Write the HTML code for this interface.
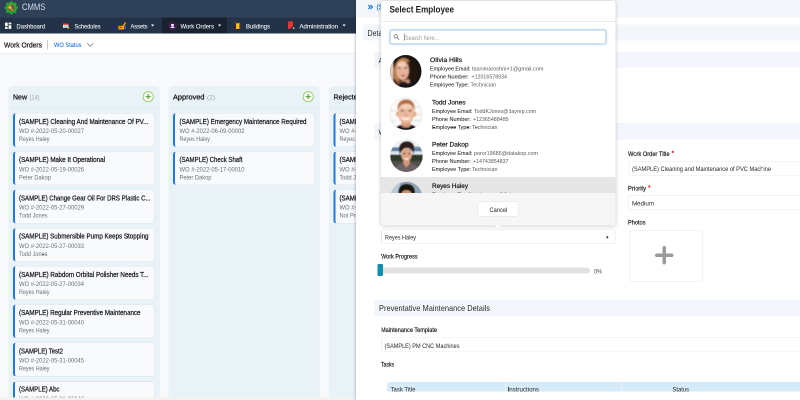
<!DOCTYPE html>
<html lang="en"><head><meta charset="utf-8"><title>CMMS - Work Orders</title>
<style>
html,body{margin:0;padding:0;width:800px;height:400px;overflow:hidden;background:#f8f9fb}
body{font-family:"Liberation Sans",sans-serif}
#stage{position:absolute;left:0;top:0;width:1600px;height:800px;transform:scale(.5);transform-origin:0 0;will-change:transform;overflow:hidden;background:#f8f9fb}
.b{position:absolute;box-sizing:border-box}
.t{position:absolute;white-space:nowrap;transform-origin:0 50%;transform:scaleX(.9)}
svg{position:absolute;overflow:visible}

#t1{transform:scaleX(0.8704)}
#t2{transform:scaleX(0.8835)}
#t3{transform:scaleX(0.8442)}
#t4{transform:scaleX(0.8591)}
#t5{transform:scaleX(0.8993)}
#t6{transform:scaleX(0.8967)}
#t7{transform:scaleX(0.9215)}
#t8{transform:scaleX(0.8858)}
#t9{transform:scaleX(0.8889)}
#t10{transform:scaleX(0.9213)}
#t11{transform:scaleX(0.8785)}
#t12{transform:scaleX(0.9094)}
#t13{transform:scaleX(0.9285)}
#t14{transform:scaleX(0.8543)}
#t15{transform:scaleX(0.9081)}
#t16{transform:scaleX(0.9285)}
#t17{transform:scaleX(0.9141)}
#t18{transform:scaleX(0.8773)}
#t19{transform:scaleX(0.9285)}
#t20{transform:scaleX(0.8848)}
#t21{transform:scaleX(0.903)}
#t22{transform:scaleX(0.9285)}
#t23{transform:scaleX(0.8848)}
#t24{transform:scaleX(0.9088)}
#t25{transform:scaleX(0.9285)}
#t26{transform:scaleX(0.8543)}
#t27{transform:scaleX(0.9028)}
#t28{transform:scaleX(0.9285)}
#t29{transform:scaleX(0.8543)}
#t30{transform:scaleX(0.865)}
#t31{transform:scaleX(0.9285)}
#t32{transform:scaleX(0.8543)}
#t33{transform:scaleX(0.8803)}
#t34{transform:scaleX(0.9285)}
#t35{transform:scaleX(0.8543)}
#t36{transform:scaleX(0.969)}
#t37{transform:scaleX(1.023)}
#t38{transform:scaleX(0.9025)}
#t39{transform:scaleX(0.9285)}
#t40{transform:scaleX(0.8543)}
#t41{transform:scaleX(0.8741)}
#t42{transform:scaleX(0.9285)}
#t43{transform:scaleX(0.9141)}
#t44{transform:scaleX(0.9341)}
#t45{transform:scaleX(1.023)}
#t46{transform:scaleX(0.8824)}
#t47{transform:scaleX(0.9285)}
#t48{transform:scaleX(0.8543)}
#t49{transform:scaleX(0.9072)}
#t50{transform:scaleX(0.9285)}
#t51{transform:scaleX(0.8848)}
#t52{transform:scaleX(0.8911)}
#t53{transform:scaleX(0.9285)}
#t54{transform:scaleX(0.9064)}
#t56{transform:scaleX(0.902)}
#t59{transform:scaleX(0.9225)}
#t61{transform:scaleX(0.8902)}
#t62{transform:scaleX(0.9335)}
#t64{transform:scaleX(0.9667)}
#t65{transform:scaleX(0.9072)}
#t66{transform:scaleX(0.8826)}
#t67{transform:scaleX(0.8933)}
#t68{transform:scaleX(0.9225)}
#t69{transform:scaleX(0.898)}
#t70{transform:scaleX(0.8999)}
#t71{transform:scaleX(0.8681)}
#t72{transform:scaleX(0.8209)}
#t73{transform:scaleX(0.9679)}
#t74{transform:scaleX(0.9943)}
#t75{transform:scaleX(0.9391)}
#t76{transform:scaleX(0.9016)}
#t77{transform:scaleX(0.8735)}
#t78{transform:scaleX(1.0549)}
#t79{transform:scaleX(0.9287)}
#t80{transform:scaleX(0.9533)}
#t81{transform:scaleX(0.9556)}
#t82{transform:scaleX(0.9137)}
#t83{transform:scaleX(0.9381)}
#t84{transform:scaleX(0.931)}
#t85{transform:scaleX(1.0075)}
#t86{transform:scaleX(0.9287)}
#t87{transform:scaleX(0.9107)}
#t88{transform:scaleX(0.9556)}
#t89{transform:scaleX(0.9137)}
#t90{transform:scaleX(0.9381)}
#t91{transform:scaleX(0.931)}
#t92{transform:scaleX(1.0102)}
#t93{transform:scaleX(0.9287)}
#t94{transform:scaleX(0.9311)}
#t95{transform:scaleX(0.9556)}
#t96{transform:scaleX(0.9137)}
#t97{transform:scaleX(0.9381)}
#t98{transform:scaleX(0.931)}
#t99{transform:scaleX(0.9769)}
#t100{transform:scaleX(0.9287)}
#t101{transform:scaleX(0.9195)}
#t102{transform:scaleX(0.9556)}
#t103{transform:scaleX(0.9137)}
#t104{transform:scaleX(0.9381)}
#t105{transform:scaleX(0.931)}
#t106{transform:scaleX(0.8935)}
</style></head>
<body>
<div id="stage">
<div class="b" style="left:0px;top:0px;width:1600px;height:35px;background:#2f4059;"></div>
<div class="b" style="left:0px;top:35px;width:1600px;height:32.2px;background:#243247;"></div>
<div class="b" style="left:324px;top:35px;width:130px;height:32.2px;background:#19222f;"></div>
<svg style="left:9.4px;top:1.6px" width="27.2px" height="27.2px" viewBox="-14 -14 28 28">
<g fill="#22a830"><circle r="10.8"/>
<rect x="-3.200" y="-13.600" width="6.400" height="27.200" rx="2"/><rect x="-3.200" y="-13.600" width="6.400" height="27.200" rx="2" transform="rotate(45)"/><rect x="-3.200" y="-13.600" width="6.400" height="27.200" rx="2" transform="rotate(90)"/><rect x="-3.200" y="-13.600" width="6.400" height="27.200" rx="2" transform="rotate(135)"/></g>
<circle r="6.400" fill="#4b5563" stroke="#c2631c" stroke-width="1.6"/>
<path transform="scale(.72)" d="M-5.500 -4.500a3 3 0 0 1 4.500 -1l-2 2 1.500 1.500 2 -2a3 3 0 0 1 -1 4.500l5.500 5.500-2 2-5.500-5.500a3.200 3.200 0 0 1 -3 -7z" fill="#ffc021"/>
</svg>
<span id="t1" class="t" style="left:44.4px;top:4.34px;font-size:17.6px;line-height:21.12px;color:#d3dbe8;">CMMS</span>
<svg style="left:10px;top:45px" width="12.6px" height="13px" viewBox="0 0 14 14"><rect x="0" y="0" width="6" height="8" fill="#fff"/><rect x="8" y="0" width="6" height="4" fill="#fff"/><rect x="0" y="10" width="6" height="4" fill="#fff"/><rect x="8" y="6" width="6" height="8" fill="#fff"/></svg>
<span id="t2" class="t" style="left:33px;top:44.58px;font-size:13.2px;line-height:15.84px;color:#f0f3f8;-webkit-text-stroke:.2px #f0f3f8;">Dashboard</span>
<svg style="left:126.4px;top:47.2px" width="12.8px" height="10.8px" viewBox="0 0 14 12"><rect x="0" y="0" width="12" height="10" fill="#e9edf2"/><rect x="0" y="0" width="12" height="3" fill="#e53935"/><rect x="2" y="5" width="8" height="1.4" fill="#9aa3ad"/><rect x="2" y="7.5" width="8" height="1.4" fill="#9aa3ad"/><circle cx="12" cy="10" r="2" fill="#f4b400"/></svg>
<span id="t3" class="t" style="left:149px;top:44.58px;font-size:13.2px;line-height:15.84px;color:#f0f3f8;-webkit-text-stroke:.2px #f0f3f8;">Schedules</span>
<svg style="left:236px;top:43px" width="17px" height="17px" viewBox="0 0 17 17"><path d="M2 10h9v4H2z" fill="none" stroke="#f4a51c" stroke-width="2.4"/><path d="M6 9l3 3 6-10" fill="none" stroke="#f4a51c" stroke-width="2.6"/><rect x="1" y="15" width="11" height="2" fill="#3b6fd4"/><rect x="13" y="8" width="2.5" height="7" fill="#3b6fd4"/></svg>
<span id="t4" class="t" style="left:261px;top:44.58px;font-size:13.2px;line-height:15.84px;color:#f0f3f8;-webkit-text-stroke:.2px #f0f3f8;">Assets</span>
<svg style="left:301.8px;top:48.6px" width="6.4px" height="4px" viewBox="0 0 8 5"><path d="M0 0h8l-4 5z" fill="#fff"/></svg>
<svg style="left:337px;top:44px" width="16px" height="16px" viewBox="0 0 16 16"><circle cx="8" cy="8" r="7.5" fill="#3a1a5e" stroke="#7a1f2b" stroke-width="1"/><path d="M5 4h6v3h-1v3h2v2H4v-2h2V7H5z" fill="#dfe3f5"/></svg>
<span id="t5" class="t" style="left:361px;top:44.58px;font-size:13.2px;line-height:15.84px;color:#f0f3f8;-webkit-text-stroke:.2px #f0f3f8;">Work Orders</span>
<svg style="left:435.8px;top:48.6px" width="6.4px" height="4px" viewBox="0 0 8 5"><path d="M0 0h8l-4 5z" fill="#fff"/></svg>
<svg style="left:468.6px;top:43px" width="12.4px" height="17.6px" viewBox="0 0 14 18"><rect x="3" y="3" width="9" height="14" fill="#f5c518"/><rect x="1" y="3" width="2.5" height="14" fill="#5a1a1a"/><rect x="11" y="5" width="2.5" height="12" fill="#7a2a1a"/><rect x="0" y="0" width="2" height="2" fill="#e53935"/><rect x="4" y="16" width="7" height="1.6" fill="#2d1a12"/></svg>
<span id="t6" class="t" style="left:492px;top:44.58px;font-size:13.2px;line-height:15.84px;color:#f0f3f8;-webkit-text-stroke:.2px #f0f3f8;">Buildings</span>
<svg style="left:576px;top:43px" width="14px" height="17px" viewBox="0 0 14 17"><path d="M0 0h10v10l-4 3-2 2H0z" fill="#e8342c"/><rect x="10" y="12" width="3" height="3" fill="#cfd6e0"/></svg>
<span id="t7" class="t" style="left:599px;top:44.58px;font-size:13.2px;line-height:15.84px;color:#f0f3f8;-webkit-text-stroke:.2px #f0f3f8;">Administration</span>
<svg style="left:684.8px;top:48.6px" width="6.4px" height="4px" viewBox="0 0 8 5"><path d="M0 0h8l-4 5z" fill="#fff"/></svg>
<div class="b" style="left:0px;top:68px;width:1600px;height:39px;background:#ffffff;border-bottom:1px solid #dfe3ee;"></div>
<span id="t8" class="t" style="left:8px;top:80.58px;font-size:15.2px;line-height:18.24px;color:#262626;-webkit-text-stroke:.55px #262626;">Work Orders</span>
<div class="b" style="left:94.4px;top:80px;width:1.4px;height:19px;background:#c9ccd2;"></div>
<span id="t9" class="t" style="left:108px;top:82.02px;font-size:12.8px;line-height:15.36px;color:#1a73e8;-webkit-text-stroke:.15px #1a73e8;">WO Status</span>
<svg style="left:174px;top:86px" width="13px" height="7.2px" viewBox="0 0 13 7"><path d="M.5 .5l6 6 6-6" fill="none" stroke="#7d828c" stroke-width="1.5"/></svg>
<div class="b" style="left:17px;top:172px;width:303px;height:660px;background:#e9f3f7;border-radius:8px;"></div>
<div class="b" style="left:17px;top:214.6px;width:303px;height:1.4px;background:#dbe6ee;"></div>
<span id="t10" class="t" style="left:26px;top:185.18px;font-size:15.2px;line-height:18.24px;color:#1d1d1f;-webkit-text-stroke:.6px #1d1d1f;">New</span>
<span id="t11" class="t" style="left:58.6px;top:187.42px;font-size:12.8px;line-height:15.36px;color:#9aa0a6;">(14)</span>
<svg style="left:284.6px;top:182.2px" width="22.8px" height="22.8px" viewBox="0 0 24 24"><circle cx="12" cy="12" r="10.6" fill="#fdfefb" stroke="#8cc152" stroke-width="1.6"/><path d="M12 6.5v11M6.5 12h11" stroke="#5aa02c" stroke-width="2.4" fill="none"/></svg>
<div class="b" style="left:26px;top:226px;width:283px;height:67.6px;background:#f9fafc;border:1px solid #dfe5ea;border-left:4.4px solid #1877f2;border-radius:6px;"></div>
<span id="t12" class="t" style="left:38.2px;top:235.62px;font-size:13.8px;line-height:16.56px;color:#1b1b1f;-webkit-text-stroke:.5px #1b1b1f;">(SAMPLE) Cleaning And Maintenance Of PV...</span>
<span id="t13" class="t" style="left:38.2px;top:255.14px;font-size:12.6px;line-height:15.12px;color:#6b7076;">WO #-2022-05-20-00027</span>
<span id="t14" class="t" style="left:38.2px;top:271.14px;font-size:12.6px;line-height:15.12px;color:#6b7076;">Reyes Haley</span>
<div class="b" style="left:26px;top:302.54px;width:283px;height:67.6px;background:#f9fafc;border:1px solid #dfe5ea;border-left:4.4px solid #1877f2;border-radius:6px;"></div>
<span id="t15" class="t" style="left:38.2px;top:312.16px;font-size:13.8px;line-height:16.56px;color:#1b1b1f;-webkit-text-stroke:.5px #1b1b1f;">(SAMPLE) Make It Operational</span>
<span id="t16" class="t" style="left:38.2px;top:331.68px;font-size:12.6px;line-height:15.12px;color:#6b7076;">WO #-2022-05-19-00026</span>
<span id="t17" class="t" style="left:38.2px;top:347.68px;font-size:12.6px;line-height:15.12px;color:#6b7076;">Peter Dakop</span>
<div class="b" style="left:26px;top:379.08px;width:283px;height:67.6px;background:#f9fafc;border:1px solid #dfe5ea;border-left:4.4px solid #1877f2;border-radius:6px;"></div>
<span id="t18" class="t" style="left:38.2px;top:388.7px;font-size:13.8px;line-height:16.56px;color:#1b1b1f;-webkit-text-stroke:.5px #1b1b1f;">(SAMPLE) Change Gear Oil For DRS Plastic C...</span>
<span id="t19" class="t" style="left:38.2px;top:408.22px;font-size:12.6px;line-height:15.12px;color:#6b7076;">WO #-2022-05-27-00029</span>
<span id="t20" class="t" style="left:38.2px;top:424.22px;font-size:12.6px;line-height:15.12px;color:#6b7076;">Todd Jones</span>
<div class="b" style="left:26px;top:455.62px;width:283px;height:67.6px;background:#f9fafc;border:1px solid #dfe5ea;border-left:4.4px solid #1877f2;border-radius:6px;"></div>
<span id="t21" class="t" style="left:38.2px;top:465.24px;font-size:13.8px;line-height:16.56px;color:#1b1b1f;-webkit-text-stroke:.5px #1b1b1f;">(SAMPLE) Submersible Pump Keeps Stopping</span>
<span id="t22" class="t" style="left:38.2px;top:484.76px;font-size:12.6px;line-height:15.12px;color:#6b7076;">WO #-2022-05-27-00033</span>
<span id="t23" class="t" style="left:38.2px;top:500.76px;font-size:12.6px;line-height:15.12px;color:#6b7076;">Todd Jones</span>
<div class="b" style="left:26px;top:532.16px;width:283px;height:67.6px;background:#f9fafc;border:1px solid #dfe5ea;border-left:4.4px solid #1877f2;border-radius:6px;"></div>
<span id="t24" class="t" style="left:38.2px;top:541.78px;font-size:13.8px;line-height:16.56px;color:#1b1b1f;-webkit-text-stroke:.5px #1b1b1f;">(SAMPLE) Rabdom Orbital Polisher Needs T...</span>
<span id="t25" class="t" style="left:38.2px;top:561.3px;font-size:12.6px;line-height:15.12px;color:#6b7076;">WO #-2022-05-27-00034</span>
<span id="t26" class="t" style="left:38.2px;top:577.3px;font-size:12.6px;line-height:15.12px;color:#6b7076;">Reyes Haley</span>
<div class="b" style="left:26px;top:608.7px;width:283px;height:67.6px;background:#f9fafc;border:1px solid #dfe5ea;border-left:4.4px solid #1877f2;border-radius:6px;"></div>
<span id="t27" class="t" style="left:38.2px;top:618.32px;font-size:13.8px;line-height:16.56px;color:#1b1b1f;-webkit-text-stroke:.5px #1b1b1f;">(SAMPLE) Regular Preventive Maintenance</span>
<span id="t28" class="t" style="left:38.2px;top:637.84px;font-size:12.6px;line-height:15.12px;color:#6b7076;">WO #-2022-05-31-00040</span>
<span id="t29" class="t" style="left:38.2px;top:653.84px;font-size:12.6px;line-height:15.12px;color:#6b7076;">Reyes Haley</span>
<div class="b" style="left:26px;top:685.24px;width:283px;height:67.6px;background:#f9fafc;border:1px solid #dfe5ea;border-left:4.4px solid #1877f2;border-radius:6px;"></div>
<span id="t30" class="t" style="left:38.2px;top:694.86px;font-size:13.8px;line-height:16.56px;color:#1b1b1f;-webkit-text-stroke:.5px #1b1b1f;">(SAMPLE) Test2</span>
<span id="t31" class="t" style="left:38.2px;top:714.38px;font-size:12.6px;line-height:15.12px;color:#6b7076;">WO #-2022-05-31-00045</span>
<span id="t32" class="t" style="left:38.2px;top:730.38px;font-size:12.6px;line-height:15.12px;color:#6b7076;">Reyes Haley</span>
<div class="b" style="left:26px;top:761.78px;width:283px;height:67.6px;background:#f9fafc;border:1px solid #dfe5ea;border-left:4.4px solid #1877f2;border-radius:6px;"></div>
<span id="t33" class="t" style="left:38.2px;top:771.4px;font-size:13.8px;line-height:16.56px;color:#1b1b1f;-webkit-text-stroke:.5px #1b1b1f;">(SAMPLE) Abc</span>
<span id="t34" class="t" style="left:38.2px;top:790.92px;font-size:12.6px;line-height:15.12px;color:#6b7076;">WO #-2022-05-31-00046</span>
<span id="t35" class="t" style="left:38.2px;top:806.92px;font-size:12.6px;line-height:15.12px;color:#6b7076;">Reyes Haley</span>
<div class="b" style="left:337.4px;top:172px;width:303px;height:660px;background:#e9f3f7;border-radius:8px;"></div>
<div class="b" style="left:337.4px;top:214.6px;width:303px;height:1.4px;background:#dbe6ee;"></div>
<span id="t36" class="t" style="left:346.4px;top:185.18px;font-size:15.2px;line-height:18.24px;color:#1d1d1f;-webkit-text-stroke:.6px #1d1d1f;">Approved</span>
<span id="t37" class="t" style="left:414px;top:187.42px;font-size:12.8px;line-height:15.36px;color:#9aa0a6;">(2)</span>
<svg style="left:605px;top:182.2px" width="22.8px" height="22.8px" viewBox="0 0 24 24"><circle cx="12" cy="12" r="10.6" fill="#fdfefb" stroke="#8cc152" stroke-width="1.6"/><path d="M12 6.5v11M6.5 12h11" stroke="#5aa02c" stroke-width="2.4" fill="none"/></svg>
<div class="b" style="left:346.4px;top:226px;width:283px;height:67.6px;background:#f9fafc;border:1px solid #dfe5ea;border-left:4.4px solid #1877f2;border-radius:6px;"></div>
<span id="t38" class="t" style="left:358.6px;top:235.62px;font-size:13.8px;line-height:16.56px;color:#1b1b1f;-webkit-text-stroke:.5px #1b1b1f;">(SAMPLE) Emergency Maintenance Required</span>
<span id="t39" class="t" style="left:358.6px;top:255.14px;font-size:12.6px;line-height:15.12px;color:#6b7076;">WO #-2022-06-09-00002</span>
<span id="t40" class="t" style="left:358.6px;top:271.14px;font-size:12.6px;line-height:15.12px;color:#6b7076;">Reyes Haley</span>
<div class="b" style="left:346.4px;top:302.54px;width:283px;height:67.6px;background:#f9fafc;border:1px solid #dfe5ea;border-left:4.4px solid #1877f2;border-radius:6px;"></div>
<span id="t41" class="t" style="left:358.6px;top:312.16px;font-size:13.8px;line-height:16.56px;color:#1b1b1f;-webkit-text-stroke:.5px #1b1b1f;">(SAMPLE) Check Shaft</span>
<span id="t42" class="t" style="left:358.6px;top:331.68px;font-size:12.6px;line-height:15.12px;color:#6b7076;">WO #-2022-05-17-00010</span>
<span id="t43" class="t" style="left:358.6px;top:347.68px;font-size:12.6px;line-height:15.12px;color:#6b7076;">Peter Dakop</span>
<div class="b" style="left:658px;top:172px;width:303px;height:660px;background:#e9f3f7;border-radius:8px;"></div>
<div class="b" style="left:658px;top:214.6px;width:303px;height:1.4px;background:#dbe6ee;"></div>
<span id="t44" class="t" style="left:667px;top:185.18px;font-size:15.2px;line-height:18.24px;color:#1d1d1f;-webkit-text-stroke:.6px #1d1d1f;">Rejected</span>
<span id="t45" class="t" style="left:727.6px;top:187.42px;font-size:12.8px;line-height:15.36px;color:#9aa0a6;">(3)</span>
<div class="b" style="left:667px;top:226px;width:283px;height:67.6px;background:#f9fafc;border:1px solid #dfe5ea;border-left:4.4px solid #1877f2;border-radius:6px;"></div>
<span id="t46" class="t" style="left:679.2px;top:235.62px;font-size:13.8px;line-height:16.56px;color:#1b1b1f;-webkit-text-stroke:.5px #1b1b1f;">(SAMPLE) Replace Filter</span>
<span id="t47" class="t" style="left:679.2px;top:255.14px;font-size:12.6px;line-height:15.12px;color:#6b7076;">WO #-2022-05-18-00012</span>
<span id="t48" class="t" style="left:679.2px;top:271.14px;font-size:12.6px;line-height:15.12px;color:#6b7076;">Reyes Haley</span>
<div class="b" style="left:667px;top:302.54px;width:283px;height:67.6px;background:#f9fafc;border:1px solid #dfe5ea;border-left:4.4px solid #1877f2;border-radius:6px;"></div>
<span id="t49" class="t" style="left:679.2px;top:312.16px;font-size:13.8px;line-height:16.56px;color:#1b1b1f;-webkit-text-stroke:.5px #1b1b1f;">(SAMPLE) Inspect Belt</span>
<span id="t50" class="t" style="left:679.2px;top:331.68px;font-size:12.6px;line-height:15.12px;color:#6b7076;">WO #-2022-05-18-00014</span>
<span id="t51" class="t" style="left:679.2px;top:347.68px;font-size:12.6px;line-height:15.12px;color:#6b7076;">Todd Jones</span>
<div class="b" style="left:667px;top:379.08px;width:283px;height:67.6px;background:#f9fafc;border:1px solid #dfe5ea;border-left:4.4px solid #1877f2;border-radius:6px;"></div>
<span id="t52" class="t" style="left:679.2px;top:388.7px;font-size:13.8px;line-height:16.56px;color:#1b1b1f;-webkit-text-stroke:.5px #1b1b1f;">(SAMPLE) Lubricate Bearings</span>
<span id="t53" class="t" style="left:679.2px;top:408.22px;font-size:12.6px;line-height:15.12px;color:#6b7076;">WO #-2022-05-18-00016</span>
<span id="t54" class="t" style="left:679.2px;top:424.22px;font-size:12.6px;line-height:15.12px;color:#6b7076;">Not Provided</span>
<div class="b" style="left:0px;top:794.8px;width:720px;height:6px;background:#f2f2f2;"></div>
<div class="b" style="left:712px;top:0px;width:888px;height:800px;background:#ffffff;box-shadow:-1px 0 5px rgba(30,40,60,.35);"></div>
<div class="b" style="left:712px;top:0px;width:888px;height:35.4px;background:#f3f6fb;"></div>
<svg style="left:735.4px;top:8.6px" width="11px" height="10px" viewBox="0 0 10 10"><path d="M1 1l4 4-4 4M5.500 1l4 4-4 4" fill="none" stroke="#1a73e8" stroke-width="2.2"/></svg>
<span id="t55" class="t" style="left:752.6px;top:5.74px;font-size:14.6px;line-height:17.52px;color:#1a73e8;-webkit-text-stroke:.3px #1a73e8;">(SAMPLE) Cleaning and Maintenance of PVC Machine</span>
<div class="b" style="left:724.6px;top:49.4px;width:880px;height:31.8px;background:#f3f6fb;border-radius:6px 0 0 6px;"></div>
<span id="t56" class="t" style="left:735.4px;top:57.74px;font-size:15.6px;line-height:18.72px;color:#2c2c2c;">Details</span>
<div class="b" style="left:748px;top:104px;width:860px;height:31.4px;background:#f3f6fb;border-radius:6px 0 0 6px;"></div>
<span id="t57" class="t" style="left:757.2px;top:111.98px;font-size:15.2px;line-height:18.24px;color:#2c2c2c;">Asset Details</span>
<div class="b" style="left:748px;top:246.2px;width:860px;height:33px;background:#f3f6fb;border-radius:6px 0 0 6px;"></div>
<span id="t58" class="t" style="left:757.2px;top:254.78px;font-size:15.2px;line-height:18.24px;color:#2c2c2c;">Work Order Details</span>
<span id="t59" class="t" style="left:1256px;top:301.46px;font-size:12.4px;line-height:14.88px;color:#1f1f1f;-webkit-text-stroke:.4px #1f1f1f;">Work Order Title</span>
<span id="t60" class="t" style="left:1343px;top:297.1px;font-size:15px;line-height:18px;color:#e02020;font-weight:700;">*</span>
<div class="b" style="left:1256px;top:321.6px;width:360px;height:29.8px;background:#fff;border:1px solid #e6e8ec;border-radius:4px;"></div>
<span id="t61" class="t" style="left:1264px;top:330.42px;font-size:12.8px;line-height:15.36px;color:#2a2a2a;">(SAMPLE) Cleaning and Maintenance of PVC Machine</span>
<span id="t62" class="t" style="left:1256px;top:370.06px;font-size:12.4px;line-height:14.88px;color:#1f1f1f;-webkit-text-stroke:.4px #1f1f1f;">Priority</span>
<span id="t63" class="t" style="left:1296px;top:365.7px;font-size:15px;line-height:18px;color:#e02020;font-weight:700;">*</span>
<div class="b" style="left:1256px;top:390px;width:360px;height:30.2px;background:#fff;border:1px solid #e6e8ec;border-radius:4px;"></div>
<span id="t64" class="t" style="left:1264px;top:398.82px;font-size:12.8px;line-height:15.36px;color:#2a2a2a;">Medium</span>
<span id="t65" class="t" style="left:1256px;top:438.06px;font-size:12.4px;line-height:14.88px;color:#1f1f1f;-webkit-text-stroke:.4px #1f1f1f;">Photos</span>
<div class="b" style="left:1258.6px;top:460.6px;width:146.8px;height:102px;background:#fff;border:1px solid #e3e5e8;border-radius:4px;"></div>
<svg style="left:1310.2px;top:492.2px" width="37px" height="37px" viewBox="0 0 37 37"><path d="M18.5 3.500v30M3.500 18.500h30" stroke="#9a9a9a" stroke-width="7" stroke-linecap="round" fill="none"/></svg>
<div class="b" style="left:762px;top:459.2px;width:469px;height:28.4px;background:#fff;border:1px solid #e3e6ea;border-radius:4px;"></div>
<span id="t66" class="t" style="left:770px;top:468.46px;font-size:12.4px;line-height:14.88px;color:#2a2a2a;">Reyes Haley</span>
<svg style="left:1212.6px;top:471px" width="4.4px" height="6.8px" viewBox="0 0 4 7"><path d="M0 0l4 3.5-4 3.5z" fill="#222"/></svg>
<span id="t67" class="t" style="left:762px;top:506.06px;font-size:12.4px;line-height:14.88px;color:#1f1f1f;-webkit-text-stroke:.4px #1f1f1f;">Work Progress</span>
<div class="b" style="left:756px;top:535.4px;width:424px;height:12px;background:#e1e1e1;border-radius:6px;"></div>
<div class="b" style="left:754.8px;top:528px;width:11.4px;height:24px;background:#0b8fae;border-radius:2.4px;"></div>
<span id="t68" class="t" style="left:1188px;top:536.3px;font-size:12px;line-height:14.4px;color:#444;">0%</span>
<div class="b" style="left:748px;top:599px;width:860px;height:33.2px;background:#f3f6fb;border-radius:6px 0 0 6px;"></div>
<span id="t69" class="t" style="left:758px;top:607.14px;font-size:16.6px;line-height:19.92px;color:#2c2c2c;">Preventative Maintenance Details</span>
<span id="t70" class="t" style="left:762px;top:653.06px;font-size:12.4px;line-height:14.88px;color:#1f1f1f;-webkit-text-stroke:.4px #1f1f1f;">Maintenance Template</span>
<div class="b" style="left:762px;top:673.6px;width:860px;height:30px;background:#fff;border:1px solid #eceef1;border-radius:4px;"></div>
<span id="t71" class="t" style="left:769px;top:683.82px;font-size:12.8px;line-height:15.36px;color:#2a2a2a;">(SAMPLE) PM CNC Machines</span>
<span id="t72" class="t" style="left:762px;top:722.06px;font-size:12.4px;line-height:14.88px;color:#1f1f1f;-webkit-text-stroke:.4px #1f1f1f;">Tasks</span>
<div class="b" style="left:774px;top:762.8px;width:840px;height:21.6px;background:#d6ebf9;border-radius:6px 0 0 0;"></div>
<div class="b" style="left:1010px;top:763px;width:1.2px;height:21.6px;background:#eef6fc;"></div>
<div class="b" style="left:1242px;top:763px;width:1.2px;height:21.6px;background:#eef6fc;"></div>
<span id="t73" class="t" style="left:781px;top:771.86px;font-size:12.4px;line-height:14.88px;color:#2a2a2a;">Task Title</span>
<span id="t74" class="t" style="left:1015px;top:771.86px;font-size:12.4px;line-height:14.88px;color:#2a2a2a;">Instructions</span>
<span id="t75" class="t" style="left:1345px;top:771.86px;font-size:12.4px;line-height:14.88px;color:#2a2a2a;">Status</span>
<div class="b" style="left:774px;top:783.2px;width:840px;height:20px;background:#ffffff;"></div>
<div class="b" style="left:762px;top:2px;width:468.6px;height:448.8px;background:#ffffff;border-radius:6px;box-shadow:0 1px 8px rgba(0,0,0,.24);"></div>
<svg style="left:989px;top:450px" width="14px" height="7px" viewBox="0 0 14 7"><path d="M0 0h14l-7 7z" fill="#fdfdfd"/></svg>
<span id="t76" class="t" style="left:778.6px;top:9.4px;font-size:18px;line-height:21.6px;color:#1c1c1c;font-weight:700;">Select Employee</span>
<div class="b" style="left:762px;top:42.4px;width:468.6px;height:1.6px;background:#ebebeb;"></div>
<div class="b" style="left:778.6px;top:59.2px;width:434.8px;height:29.8px;background:#fff;border:2px solid #a3c9e8;border-radius:5px;box-shadow:0 0 5px rgba(90,160,220,.3);"></div>
<svg style="left:787px;top:68px" width="12px" height="12px" viewBox="0 0 12 12"><circle cx="4.6" cy="4.6" r="3.4" fill="none" stroke="#777" stroke-width="1.5"/><path d="M7.2 7.2l4 4" stroke="#777" stroke-width="1.8"/></svg>
<div class="b" style="left:808px;top:67px;width:1.2px;height:14.4px;background:#333;"></div>
<span id="t77" class="t" style="left:809.6px;top:68.86px;font-size:12.4px;line-height:14.88px;color:#9a9a9a;">Search here...</span>
<div class="b" style="left:762px;top:353.8px;width:468.6px;height:32.8px;background:#e6e6e6;"></div>
<span id="t78" class="t" style="left:860px;top:112.1px;font-size:13px;line-height:15.6px;color:#1c1c1c;-webkit-text-stroke:.45px #1c1c1c;">Olivia Hills</span>
<span id="t79" class="t" style="left:860px;top:130.34px;font-size:11.6px;line-height:13.92px;color:#262626;-webkit-text-stroke:.12px #262626;">Employee Email:</span>
<span id="t80" class="t" style="left:944.2px;top:130.34px;font-size:11.6px;line-height:13.92px;color:#5a5a5a;">tasnimaroshni+1@gmail.com</span>
<span id="t81" class="t" style="left:860px;top:146.14px;font-size:11.6px;line-height:13.92px;color:#262626;-webkit-text-stroke:.12px #262626;">Phone Number:</span>
<span id="t82" class="t" style="left:942.8px;top:146.14px;font-size:11.6px;line-height:13.92px;color:#5a5a5a;">+12016578934</span>
<span id="t83" class="t" style="left:860px;top:162.34px;font-size:11.6px;line-height:13.92px;color:#262626;-webkit-text-stroke:.12px #262626;">Employee Type:</span>
<span id="t84" class="t" style="left:940.6px;top:162.34px;font-size:11.6px;line-height:13.92px;color:#5a5a5a;">Technician</span>
<span id="t85" class="t" style="left:863.6px;top:196.5px;font-size:13px;line-height:15.6px;color:#1c1c1c;-webkit-text-stroke:.45px #1c1c1c;">Todd Jones</span>
<span id="t86" class="t" style="left:863.6px;top:214.74px;font-size:11.6px;line-height:13.92px;color:#262626;-webkit-text-stroke:.12px #262626;">Employee Email:</span>
<span id="t87" class="t" style="left:947.8px;top:214.74px;font-size:11.6px;line-height:13.92px;color:#5a5a5a;">ToddKJones@dayrep.com</span>
<span id="t88" class="t" style="left:863.6px;top:230.54px;font-size:11.6px;line-height:13.92px;color:#262626;-webkit-text-stroke:.12px #262626;">Phone Number:</span>
<span id="t89" class="t" style="left:946.4px;top:230.54px;font-size:11.6px;line-height:13.92px;color:#5a5a5a;">+12365488485</span>
<span id="t90" class="t" style="left:863.6px;top:246.74px;font-size:11.6px;line-height:13.92px;color:#262626;-webkit-text-stroke:.12px #262626;">Employee Type:</span>
<span id="t91" class="t" style="left:944.2px;top:246.74px;font-size:11.6px;line-height:13.92px;color:#5a5a5a;">Technician</span>
<span id="t92" class="t" style="left:863.6px;top:280.9px;font-size:13px;line-height:15.6px;color:#1c1c1c;-webkit-text-stroke:.45px #1c1c1c;">Peter Dakop</span>
<span id="t93" class="t" style="left:863.6px;top:299.14px;font-size:11.6px;line-height:13.92px;color:#262626;-webkit-text-stroke:.12px #262626;">Employee Email:</span>
<span id="t94" class="t" style="left:947.8px;top:299.14px;font-size:11.6px;line-height:13.92px;color:#5a5a5a;">poror19685@datakop.com</span>
<span id="t95" class="t" style="left:863.6px;top:314.94px;font-size:11.6px;line-height:13.92px;color:#262626;-webkit-text-stroke:.12px #262626;">Phone Number:</span>
<span id="t96" class="t" style="left:946.4px;top:314.94px;font-size:11.6px;line-height:13.92px;color:#5a5a5a;">+14743854837</span>
<span id="t97" class="t" style="left:863.6px;top:331.14px;font-size:11.6px;line-height:13.92px;color:#262626;-webkit-text-stroke:.12px #262626;">Employee Type:</span>
<span id="t98" class="t" style="left:944.2px;top:331.14px;font-size:11.6px;line-height:13.92px;color:#5a5a5a;">Technician</span>
<span id="t99" class="t" style="left:863.6px;top:364.1px;font-size:13px;line-height:15.6px;color:#1c1c1c;-webkit-text-stroke:.45px #1c1c1c;">Reyes Haley</span>
<span id="t100" class="t" style="left:863.6px;top:382.34px;font-size:11.6px;line-height:13.92px;color:#262626;-webkit-text-stroke:.12px #262626;">Employee Email:</span>
<span id="t101" class="t" style="left:947.8px;top:382.34px;font-size:11.6px;line-height:13.92px;color:#5a5a5a;">haleyreyes2@dayrep.com</span>
<span id="t102" class="t" style="left:863.6px;top:398.14px;font-size:11.6px;line-height:13.92px;color:#262626;-webkit-text-stroke:.12px #262626;">Phone Number:</span>
<span id="t103" class="t" style="left:946.4px;top:398.14px;font-size:11.6px;line-height:13.92px;color:#5a5a5a;">+12025550143</span>
<span id="t104" class="t" style="left:863.6px;top:414.34px;font-size:11.6px;line-height:13.92px;color:#262626;-webkit-text-stroke:.12px #262626;">Employee Type:</span>
<span id="t105" class="t" style="left:944.2px;top:414.34px;font-size:11.6px;line-height:13.92px;color:#5a5a5a;">Technician</span>
<svg width="0" height="0" style="left:0;top:0"><defs><filter id="bl" x="-20%" y="-20%" width="140%" height="140%"><feGaussianBlur stdDeviation="2.2"/></filter><filter id="bl2" x="-20%" y="-20%" width="140%" height="140%"><feGaussianBlur stdDeviation="1.3"/></filter></defs></svg>
<svg style="left:779.6px;top:110px" width="63px" height="65.6px" viewBox="0 0 100 100" preserveAspectRatio="none">
<defs><clipPath id="c1"><ellipse cx="50" cy="50" rx="50" ry="50"/></clipPath></defs>
<g clip-path="url(#c1)"><rect width="100" height="100" fill="#1b1311"/>
<g filter="url(#bl)">
<rect x="-5" y="10" width="16" height="80" fill="#d8b49c"/>
<rect x="4" y="20" width="5" height="60" fill="#f0dccf"/>
<path d="M10 80C6 40 18 10 44 9 66 10 78 30 78 60 78 80 72 92 66 100H20z" fill="#5e3a25"/>
<path d="M12 70C8 40 20 10 42 8 52 8 60 14 64 22 50 18 36 26 30 44 26 58 28 74 30 86z" fill="#b9814f"/>
<path d="M60 18c16 4 26 20 26 40 0 16-6 30-14 40H58z" fill="#24150f"/>
<ellipse cx="40" cy="47" rx="20" ry="29" fill="#e6b398"/>
<ellipse cx="36" cy="30" rx="13" ry="9" fill="#f2cbb3"/>
<ellipse cx="30" cy="39" rx="5" ry="2.6" fill="#6a4636"/><ellipse cx="50" cy="39" rx="5" ry="2.6" fill="#6a4636"/>
<ellipse cx="42" cy="63" rx="7" ry="2.8" fill="#b8564f"/>
<path d="M40 73c6 4 14 4 20 0l4 12H38z" fill="#c99378"/>
<path d="M26 100c2-12 10-18 20-20l12 8 12-10c12 2 22 10 26 22z" fill="#14161c"/>
</g></g></svg>
<svg style="left:779px;top:195px" width="66px" height="66px" viewBox="0 0 100 100">
<defs><clipPath id="c2"><circle cx="50" cy="50" r="48"/></clipPath></defs>
<circle cx="50" cy="50" r="49" fill="#fdfdfd" stroke="#d8dbdf" stroke-width="1.6"/>
<g clip-path="url(#c2)"><rect width="100" height="100" fill="#fbfbfb"/>
<g filter="url(#bl)">
<rect x="74" y="26" width="30" height="7" fill="#e3edf2"/><rect x="76" y="48" width="28" height="6" fill="#f1e4d6"/><rect x="72" y="66" width="32" height="8" fill="#dfeef2"/>
<rect x="-4" y="38" width="22" height="5" fill="#efe7db"/><rect x="-4" y="66" width="24" height="8" fill="#e4eeee"/>
<path d="M14 106c2-16 14-22 30-24h14c16 2 26 8 28 24z" fill="#101116"/>
<path d="M36 70h28v16c-8 6-20 6-28 0z" fill="#d4977a"/>
<ellipse cx="50.500" cy="46" rx="25" ry="35" fill="#ecbb9e"/>
<ellipse cx="24" cy="50" rx="4" ry="8" fill="#dea386"/><ellipse cx="77" cy="50" rx="4" ry="8" fill="#dea386"/>
<path d="M25 40c-3-22 9-34 25.500-34s28.500 12 25.500 34c-3-14-11-21-25.500-21s-22.500 7-25.500 21z" fill="#b36a43"/>
<ellipse cx="50" cy="27" rx="16" ry="8" fill="#f4d0b8"/>
<ellipse cx="39" cy="40" rx="6" ry="2.600" fill="#7d5848"/><ellipse cx="62" cy="40" rx="6" ry="2.600" fill="#7d5848"/>
<ellipse cx="50" cy="52" rx="5" ry="3" fill="#d99a80"/>
<path d="M36 60c7 4 21 4 28 0-3 11-25 11-28 0z" fill="#fff"/>
<path d="M34 70c8 8 24 8 32 0-4 12-28 12-32 0z" fill="#d9a083"/>
</g></g></svg>
<svg style="left:779.6px;top:278.6px" width="66px" height="65.6px" viewBox="0 0 100 100" preserveAspectRatio="none">
<defs><clipPath id="c3"><circle cx="50" cy="50" r="49"/></clipPath></defs>
<circle cx="50" cy="50" r="49.5" fill="#eef1f4" stroke="#d8dbdf" stroke-width="1"/>
<g clip-path="url(#c3)"><rect width="100" height="100" fill="#eef2f6"/>
<g filter="url(#bl2)">
<rect y="24" width="100" height="12" fill="#5d7d9e"/><rect x="60" y="22" width="40" height="8" fill="#6f8fae"/>
<rect y="36" width="100" height="10" fill="#dde5eb"/>
<rect y="46" width="100" height="26" fill="#2f3a2b"/>
<rect y="66" width="100" height="40" fill="#55504e"/>
<path d="M6 104c2-20 16-26 30-30l14 12 14-12c14 4 28 10 30 30z" fill="#6d6265"/>
<path d="M40 62h20v12l-10 12-10-12z" fill="#cf9677"/>
<ellipse cx="50" cy="46" rx="16" ry="21" fill="#dca687"/>
<path d="M30 46c-8-26 4-40 21-40s28 12 20 40c-1-13-6-21-19-21-11 0-17 6-22 21z" fill="#2a1c17"/>
<ellipse cx="43" cy="43" rx="4" ry="2" fill="#5b3c30"/><ellipse cx="58" cy="43" rx="4" ry="2" fill="#5b3c30"/>
<path d="M42 56c4 2.500 12 2.500 16 0-2 7-14 7-16 0z" fill="#fff"/>
</g></g></svg>
<svg style="left:779.6px;top:363.2px" width="66px" height="23.2px" viewBox="0 0 100 35.150" preserveAspectRatio="none">
<defs><clipPath id="c4"><circle cx="50" cy="50" r="49"/></clipPath></defs>
<circle cx="50" cy="50" r="49.5" fill="#dfe4e9" stroke="#cfd4da" stroke-width="1"/>
<g clip-path="url(#c4)"><rect width="100" height="36" fill="#8fa3b6"/>
<g filter="url(#bl2)">
<rect x="-5" y="0" width="35" height="40" fill="#b9c9d7"/>
<path d="M26 40c-4-22 8-32 24-32s28 10 24 32z" fill="#17120f"/>
<path d="M34 40c0-9 7-14 16-14s16 5 16 14z" fill="#cb9070"/>
</g></g></svg>
<div class="b" style="left:762px;top:386px;width:468.6px;height:64.8px;background:#f6f6f6;border-radius:0 0 6px 6px;"></div>
<div class="b" style="left:955px;top:402.6px;width:82.4px;height:30.4px;background:#fff;border:1px solid #e2e2e2;border-radius:5px;"></div>
<span id="t106" class="t" style="left:978.6px;top:411.82px;font-size:12.8px;line-height:15.36px;color:#222;">Cancel</span>
</div>
</body></html>
